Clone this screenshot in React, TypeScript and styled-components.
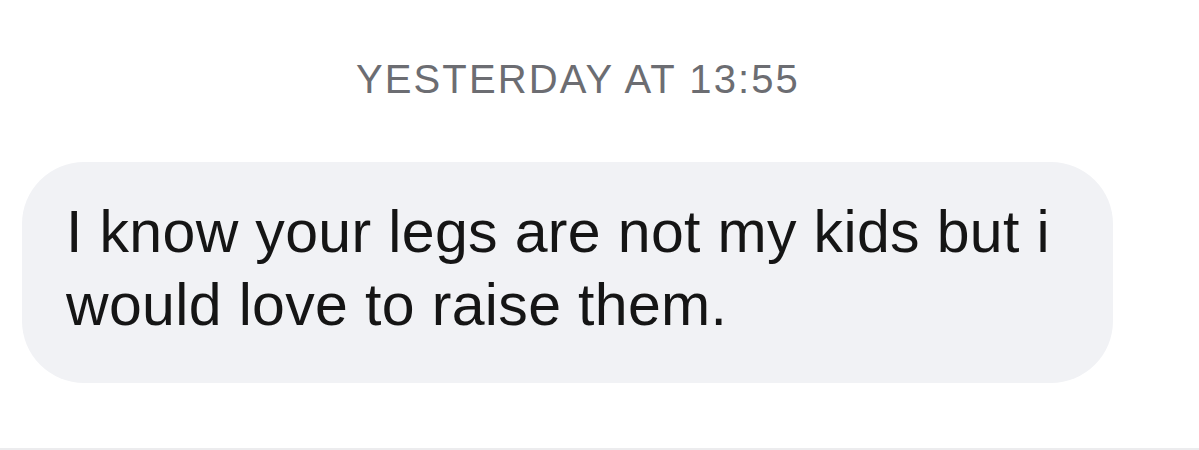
import React from 'react'
import styled, { createGlobalStyle } from 'styled-components'

const GlobalStyle = createGlobalStyle`
  html, body {
    margin: 0;
    padding: 0;
    background: #ffffff;
  }
  body {
    font-family: 'Liberation Sans', Arial, sans-serif;
  }
`

const Screen = styled.div`
  width: 1199px;
  height: 450px;
  display: flex;
  flex-direction: column;
  box-sizing: border-box;
  overflow: hidden;
`

const Stamp = styled.div`
  padding: 57px 43px 0 0;
  text-align: center;
  font-size: 40px;
  line-height: 44px;
  color: #6c6d72;
  letter-spacing: 2.1px;
`

const Thread = styled.div`
  flex: 1;
  padding: 61px 0 0 22px;
  border-bottom: 2px solid #ececee;
`

const Bubble = styled.div`
  width: 1091px;
  height: 221px;
  box-sizing: border-box;
  padding: 34px 30px 0 44px;
  background: #f1f2f5;
  border-radius: 62px;
  font-size: 59px;
  line-height: 73px;
  letter-spacing: 0.35px;
  color: #151515;
  white-space: nowrap;
`

export default function App() {
  return (
    <Screen>
      <GlobalStyle />
      <Stamp>YESTERDAY AT 13:55</Stamp>
      <Thread>
        <Bubble>
          I know your legs are not my kids but i
          <br />
          would love to raise them.
        </Bubble>
      </Thread>
    </Screen>
  )
}
